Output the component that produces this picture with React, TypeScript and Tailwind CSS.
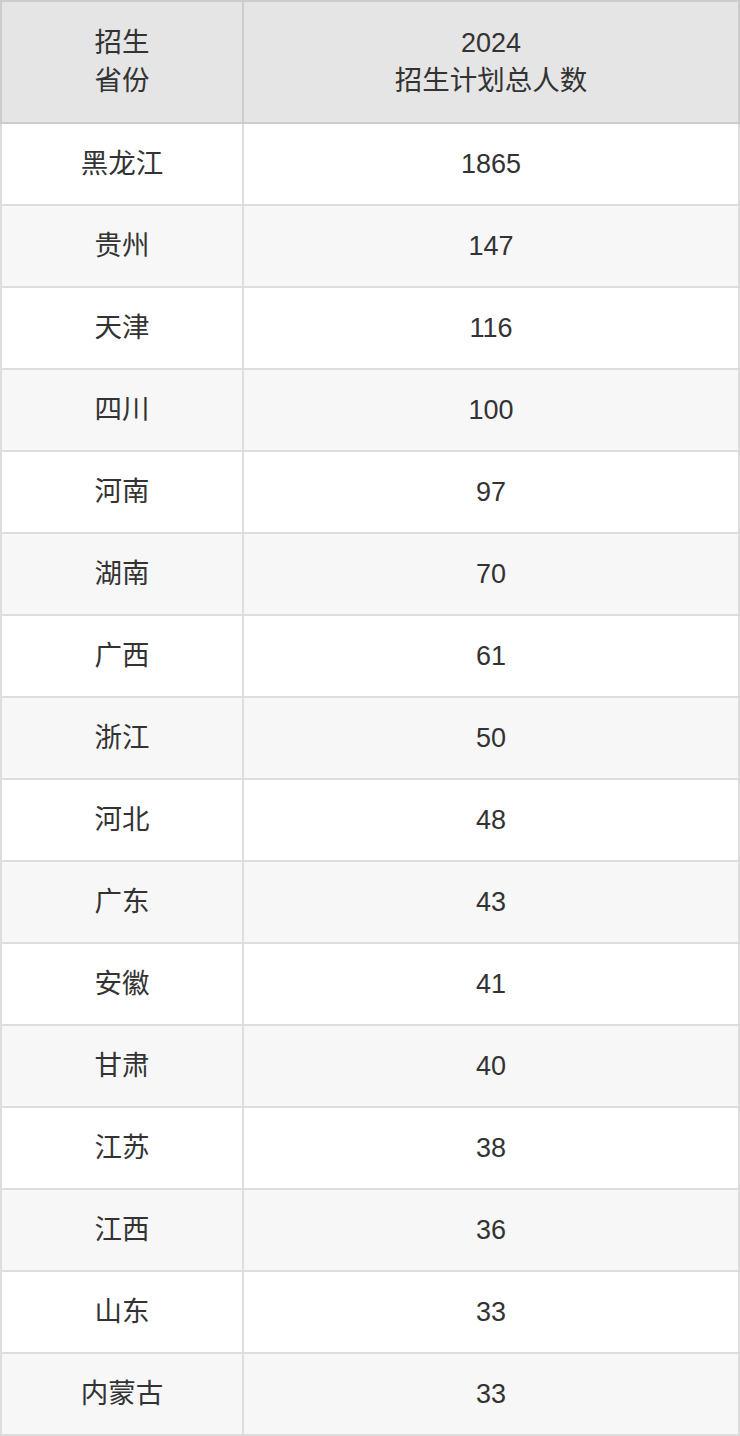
const rows: [string, number][] = [
  ["黑龙江", 1865],
  ["贵州", 147],
  ["天津", 116],
  ["四川", 100],
  ["河南", 97],
  ["湖南", 70],
  ["广西", 61],
  ["浙江", 50],
  ["河北", 48],
  ["广东", 43],
  ["安徽", 41],
  ["甘肃", 40],
  ["江苏", 38],
  ["江西", 36],
  ["山东", 33],
  ["内蒙古", 33],
];

export default function App() {
  return (
    <div
      className="w-[740px] bg-white text-[#333]"
      style={{ fontFamily: '"Liberation Sans", "Noto Sans CJK SC", sans-serif' }}
    >
      <table className="w-[740px] table-fixed border-collapse text-center">
        <colgroup>
          <col className="w-[242px]" />
          <col />
        </colgroup>
        <thead>
          <tr className="h-[122px] bg-[#e5e5e5]">
            <th className="border-2 border-[#ccc] text-[27.5px] font-normal leading-[38px]">
              招生
              <br />
              省份
            </th>
            <th className="border-2 border-[#ccc] font-normal">
              <span className="block text-[27px] leading-[38px]">2024</span>
              <span className="block text-[27.5px] leading-[38px]">招生计划总人数</span>
            </th>
          </tr>
        </thead>
        <tbody>
          {rows.map(([province, count], i) => (
            <tr key={province} className={`h-[82px] ${i % 2 === 1 ? "bg-[#f7f7f7]" : "bg-white"}`}>
              <td className="border-2 border-[#ddd] text-[27.5px]">{province}</td>
              <td className="border-2 border-[#ddd] text-[27px]">{count}</td>
            </tr>
          ))}
        </tbody>
      </table>
    </div>
  );
}
